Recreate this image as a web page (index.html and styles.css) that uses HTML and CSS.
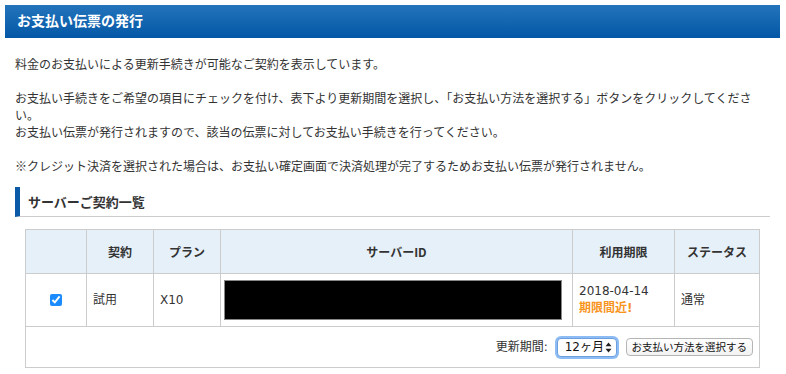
FILE: index.html
```html
<!DOCTYPE html>
<html lang="ja">
<head>
  <meta charset="UTF-8">
  <title>お支払い伝票の発行</title>
  <link rel="stylesheet" href="styles.css">
</head>
<body>
  <div class="page">
    <h1 class="page-title">お支払い伝票の発行</h1>

    <div class="content">
      <p>料金のお支払いによる更新手続きが可能なご契約を表示しています。</p>
      <p>お支払い手続きをご希望の項目にチェックを付け、表下より更新期間を選択し、「お支払い方法を選択する」ボタンをクリックしてください。<br>
      お支払い伝票が発行されますので、該当の伝票に対してお支払い手続きを行ってください。</p>
      <p>※クレジット決済を選択された場合は、お支払い確定画面で決済処理が完了するためお支払い伝票が発行されません。</p>

      <h2 class="section-title">サーバーご契約一覧</h2>

      <table class="contracts">
        <colgroup>
          <col class="c-check">
          <col class="c-type">
          <col class="c-plan">
          <col class="c-id">
          <col class="c-limit">
          <col class="c-status">
        </colgroup>
        <thead>
          <tr>
            <th></th>
            <th>契約</th>
            <th>プラン</th>
            <th>サーバーID</th>
            <th>利用期限</th>
            <th>ステータス</th>
          </tr>
        </thead>
        <tbody>
          <tr>
            <td class="center"><input type="checkbox" checked></td>
            <td>試用</td>
            <td>X10</td>
            <td><div class="redacted"></div></td>
            <td>2018-04-14<br><span class="warn">期限間近!</span></td>
            <td>通常</td>
          </tr>
          <tr>
            <td colspan="6" class="actions">
              <span class="label">更新期間:</span>
              <span class="select"><span>12ヶ月</span>
                <svg width="7" height="11" viewBox="0 0 7 11"><path d="M3.5 0.5 L6.5 4.2 H0.5 Z M3.5 10.5 L6.5 6.8 H0.5 Z" fill="#222"/></svg>
              </span>
              <button type="button" class="btn">お支払い方法を選択する</button>
            </td>
          </tr>
        </tbody>
      </table>
    </div>
  </div>
</body>
</html>
```

FILE: styles.css
```css
body {
  margin: 5px;
  font-family: "DejaVu Sans", "Noto Sans CJK JP", sans-serif;
  font-size: 12px;
  color: #333;
  background: #fff;
}

.page {
  width: 775px;
}

.page-title {
  margin: 0;
  height: 33px;
  line-height: 33px;
  padding-left: 12px;
  font-size: 14px;
  font-weight: bold;
  color: #fff;
  background: linear-gradient(#2374bb, #0457a6);
}

.content {
  padding: 0 10px;
  overflow: hidden;
}

.content p {
  margin: 17px 0 0;
  line-height: 17px;
  font-family: "Noto Sans CJK JP", sans-serif;
}

.section-title {
  margin: 13px 0 12px;
  height: 29px;
  line-height: 29px;
  padding-left: 8px;
  font-size: 13px;
  font-weight: bold;
  font-family: "Noto Sans CJK JP", sans-serif;
  border-left: 5px solid #0a5aa8;
  border-bottom: 1px solid #ccc;
}

.contracts {
  margin-left: 10px;
  width: 735px;
  table-layout: fixed;
  border-collapse: collapse;
}

.c-check { width: 61px; }
.c-type { width: 67px; }
.c-plan { width: 67px; }
.c-id { width: 352px; }
.c-limit { width: 102px; }
.c-status { width: 85px; }

.contracts th,
.contracts td {
  border: 1px solid #ccc;
}

.contracts th {
  height: 43px;
  padding: 0;
  background: #e6f0f9;
  font-weight: bold;
  text-align: center;
  font-family: "Noto Sans CJK JP", sans-serif;
}

.contracts td {
  height: 52px;
  padding: 0 6px;
  line-height: 17px;
}

.contracts td.center {
  text-align: center;
  padding: 0;
}

.contracts input[type="checkbox"] {
  margin: 0;
  width: 12px;
  height: 12px;
  accent-color: #1a8cff;
  vertical-align: middle;
}

.redacted {
  height: 38px;
  margin-left: -3px;
  width: 336px;
  background: #000;
  border: 1px solid #888;
}

.warn {
  color: #f7941d;
  font-weight: bold;
}

.contracts td.actions {
  height: 40px;
  text-align: right;
  padding-right: 6px;
}

.label {
  vertical-align: middle;
}

.select {
  display: inline-flex;
  align-items: center;
  justify-content: space-between;
  box-sizing: border-box;
  width: 60px;
  height: 19px;
  margin: 0 5px 0 5px;
  padding: 0 4px 0 7px;
  white-space: nowrap;
  font-size: 12px;
  line-height: 17px;
  color: #111;
  background: #fff;
  border: 1px solid #6b9fe0;
  border-radius: 4px;
  box-shadow: 0 0 0 2px #8dbbf3;
  vertical-align: middle;
}

.btn {
  height: 18px;
  padding: 0 5px;
  font-family: "Noto Sans CJK JP", sans-serif;
  font-size: 10.5px;
  line-height: 16px;
  color: #111;
  background: linear-gradient(#fff, #f2f2f2);
  border: 1px solid #b5b5b5;
  border-radius: 4px;
  vertical-align: middle;
}
```
